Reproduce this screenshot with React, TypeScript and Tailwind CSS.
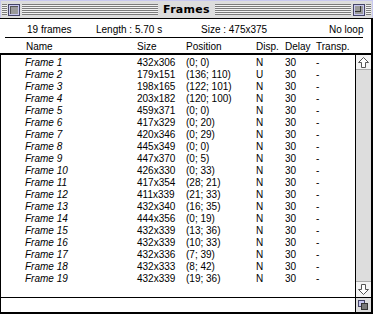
import React from "react";

const rows: [string, string, string, string][] = [
  ["Frame 1", "432x306", "(0; 0)", "N"],
  ["Frame 2", "179x151", "(136; 110)", "U"],
  ["Frame 3", "198x165", "(122; 101)", "N"],
  ["Frame 4", "203x182", "(120; 100)", "N"],
  ["Frame 5", "459x371", "(0; 0)", "N"],
  ["Frame 6", "417x329", "(0; 20)", "N"],
  ["Frame 7", "420x346", "(0; 29)", "N"],
  ["Frame 8", "445x349", "(0; 0)", "N"],
  ["Frame 9", "447x370", "(0; 5)", "N"],
  ["Frame 10", "426x330", "(0; 33)", "N"],
  ["Frame 11", "417x354", "(28; 21)", "N"],
  ["Frame 12", "411x339", "(21; 33)", "N"],
  ["Frame 13", "432x340", "(16; 35)", "N"],
  ["Frame 14", "444x356", "(0; 19)", "N"],
  ["Frame 15", "432x339", "(13; 36)", "N"],
  ["Frame 16", "432x339", "(10; 33)", "N"],
  ["Frame 17", "432x336", "(7; 39)", "N"],
  ["Frame 18", "432x333", "(8; 42)", "N"],
  ["Frame 19", "432x339", "(19; 36)", "N"],
];

const stripes =
  "h-[11px] bg-[repeating-linear-gradient(to_bottom,#7b7b7b_0px,#7b7b7b_1px,#f2f2f2_1px,#f2f2f2_2px)]";

function UpArrow() {
  return (
    <svg width="11" height="11" viewBox="0 0 11 11">
      <path d="M5.5 0.5 L10.5 5.5 L7.5 5.5 L7.5 10.5 L3.5 10.5 L3.5 5.5 L0.5 5.5 Z" fill="#ffffff" stroke="#555" strokeWidth="1" />
    </svg>
  );
}

function DownArrow() {
  return (
    <svg width="11" height="11" viewBox="0 0 11 11">
      <path d="M5.5 10.5 L10.5 5.5 L7.5 5.5 L7.5 0.5 L3.5 0.5 L3.5 5.5 L0.5 5.5 Z" fill="#ffffff" stroke="#555" strokeWidth="1" />
    </svg>
  );
}

export default function App() {
  return (
    <div
      className="w-[373px] h-[314px] bg-white text-black flex flex-col overflow-hidden"
      style={{ fontFamily: '"Liberation Sans", Arial, sans-serif' }}
    >
      {/* Title bar */}
      <div className="h-[18px] shrink-0 bg-[#dddddd] border-t border-l border-r border-[#c8c8f0] flex items-center pl-[1px] pr-[1px]">
        <div className={`w-[5px] ${stripes}`} />
        <div className="w-[1px]" />
        <div className="w-[12px] h-[12px] border border-[#444466] bg-[#c8c8f0] p-[1px]">
          <div className="w-full h-full bg-[#9a9a9a] border-t border-l border-[#555]" />
        </div>
        <div className="w-[2px]" />
        <div className={`flex-1 ${stripes}`} />
        <div
          className="px-[5px] text-[11px] font-bold leading-[14px] tracking-[0.3px]"
          style={{ fontFamily: '"DejaVu Sans", Verdana, sans-serif' }}
        >
          Frames
        </div>
        <div className={`flex-1 ${stripes}`} />
        <div className="w-[2px]" />
        <div className="w-[12px] h-[12px] border border-[#444466] bg-[#c8c8f0] p-[1px]">
          <div className="w-full h-full bg-[#9a9a9a] relative">
            <div className="w-[6px] h-[6px] border-r border-b border-[#333]" />
          </div>
        </div>
        <div className="w-[1px]" />
        <div className={`w-[5px] ${stripes}`} />
      </div>
      <div className="h-[1px] bg-black shrink-0" />

      {/* Body */}
      <div className="flex-1 flex flex-col border-r-2 border-b-2 border-black text-[10px] leading-[12px]">
        {/* info row */}
        <div className="h-[5px]" />
        <div className="h-[12px] flex pl-[27px] whitespace-nowrap">
          <span className="w-[69px]">19 frames</span>
          <span className="w-[105px]">Length : 5.70 s</span>
          <span className="w-[128px]">Size : 475x375</span>
          <span>No loop</span>
        </div>
        <div className="h-[1px]" />
        <div className="h-[1px] bg-black ml-[5px] mr-[8px]" />
        <div className="h-[3px]" />
        {/* column headers */}
        <div className="h-[12px] flex pl-[26px] whitespace-nowrap">
          <span className="w-[111px]">Name</span>
          <span className="w-[49px]">Size</span>
          <span className="w-[70px]">Position</span>
          <span className="w-[29px]">Disp.</span>
          <span className="w-[31px]">Delay</span>
          <span>Transp.</span>
        </div>
        <div className="h-[2px] bg-black" />

        {/* list + scrollbar */}
        <div className="flex-1 flex border-l border-black">
          <div className="flex-1 pt-[2px]">
            {rows.map(([name, size, pos, disp]) => (
              <div key={name} className="h-[12px] flex pl-[24px] whitespace-nowrap">
                <span className="w-[112px] italic">{name}</span>
                <span className="w-[49px]">{size}</span>
                <span className="w-[70px]">{pos}</span>
                <span className="w-[29px]">{disp}</span>
                <span className="w-[31px]">30</span>
                <span>-</span>
              </div>
            ))}
          </div>
          <div className="w-[16px] border-l border-black bg-[#dddddd] flex flex-col">
            <div className="h-[15px] bg-[#f4f4f4] border-b border-[#aaaaaa] flex items-center justify-center">
              <UpArrow />
            </div>
            <div className="flex-1" />
            <div className="h-[16px] bg-[#f4f4f4] border-t border-[#aaaaaa] flex items-center justify-center">
              <DownArrow />
            </div>
          </div>
        </div>

        {/* bottom bar */}
        <div className="h-[1px] bg-black" />
        <div className="h-[14px] flex border-l border-black">
          <div className="flex-1" />
          <div className="w-[16px] border-l border-black bg-[#dddddd] relative">
            <div className="absolute left-[2px] top-[2px] w-[7px] h-[7px] border border-[#444466] bg-[#c8c8f0]" />
            <div className="absolute left-[5px] top-[5px] w-[7px] h-[7px] border border-[#333] bg-[#777]" />
          </div>
        </div>
      </div>
    </div>
  );
}
